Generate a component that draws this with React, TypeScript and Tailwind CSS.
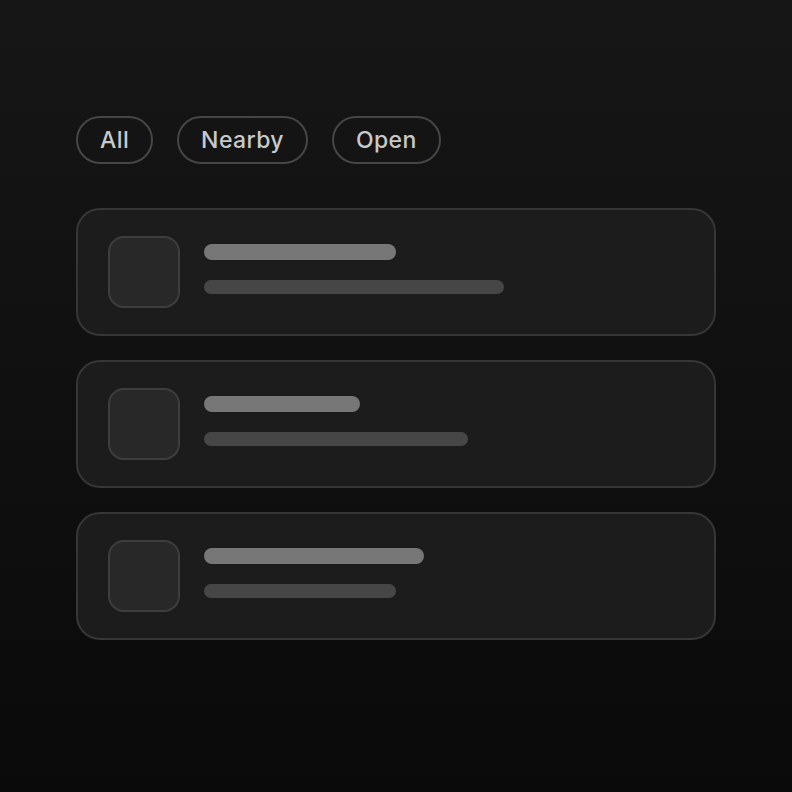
import React from "react";

const chips = ["All", "Nearby", "Open"];
const rows = [
  { a: 192, b: 300 },
  { a: 156, b: 264 },
  { a: 220, b: 192 },
];

export default function App() {
  return (
    <div
      className="w-[792px] h-[792px] bg-gradient-to-b from-[#161616] to-[#0a0a0a] pt-[116px] px-[76px]"
      style={{ fontFamily: "Inter, 'Liberation Sans', sans-serif" }}
    >
      <div className="flex gap-[24px]">
        {chips.map((c) => (
          <div
            key={c}
            className="h-[48px] px-[22px] flex items-center rounded-full border-2 border-[#464646] text-[#c9c9c9] text-[23px] font-medium tracking-[0.4px] leading-none"
          >
            {c}
          </div>
        ))}
      </div>
      <div className="mt-[44px] flex flex-col gap-[24px]">
        {rows.map((r, i) => (
          <div
            key={i}
            className="w-[640px] h-[128px] rounded-[24px] border-2 border-[#363636] bg-[#1c1c1c] pl-[30px] pt-[26px] flex items-start"
          >
            <div className="w-[72px] h-[72px] rounded-[16px] border-2 border-[#3e3e3e] bg-[#282828] shrink-0" />
            <div className="ml-[24px] pt-[8px] flex flex-col gap-[20px]">
              <div className="h-[16px] rounded-full bg-[#777777]" style={{ width: r.a }} />
              <div className="h-[14px] rounded-full bg-[#464646]" style={{ width: r.b }} />
            </div>
          </div>
        ))}
      </div>
    </div>
  );
}
